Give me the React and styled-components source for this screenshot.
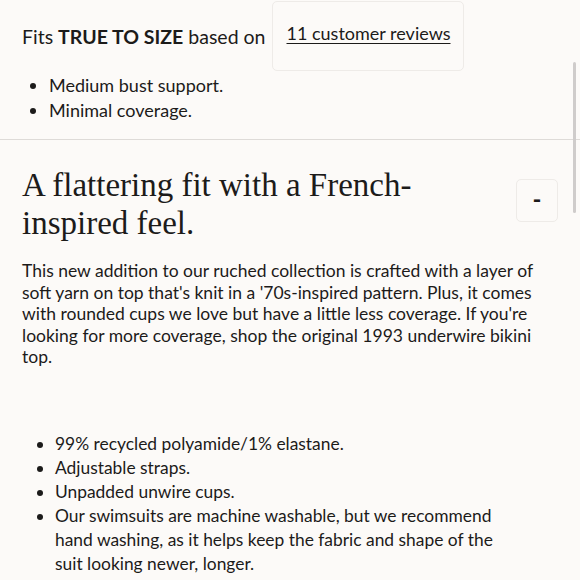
import React from "react";
import styled, { createGlobalStyle } from "styled-components";

const GlobalStyle = createGlobalStyle`
  html, body { margin: 0; padding: 0; background: #fcfaf8; }
  body { font-family: Lato, "Noto Sans", sans-serif; color: #1c1b1a; }
`;

const Page = styled.div`
  position: relative;
  width: 580px;
  height: 580px;
  overflow: hidden;
  background: #fcfaf8;
`;

const Top = styled.section`
  padding: 1px 22px 0;
`;

const FitRow = styled.div`
  display: flex;
  align-items: center;
  gap: 6px;
  font-size: 19.5px;
`;

const ReviewsButton = styled.button`
  height: 70px;
  padding: 0 12px 6px 14px;
  border: 1px solid #eeebe8;
  border-radius: 5px;
  background: transparent;
  font-family: inherit;
  font-size: 18px;
  color: #1c1b1a;
  text-decoration: underline;
  text-underline-offset: 3px;
  cursor: pointer;
`;

const List = styled.ul`
  margin: ${(p) => p.$margin};
  padding-left: ${(p) => p.$indent}px;
  font-size: ${(p) => p.$size}px;
  line-height: ${(p) => p.$lh}px;
`;

const Divider = styled.hr`
  margin: 0;
  border: 0;
  border-top: 1px solid #dedbd8;
`;

const Section = styled.section`
  padding: 26px 22px 0;
`;

const HeadRow = styled.div`
  display: flex;
  align-items: flex-start;
  justify-content: space-between;
`;

const Heading = styled.h2`
  margin: 0;
  font-family: "Liberation Serif", "Times New Roman", serif;
  font-weight: 400;
  font-size: 33px;
  line-height: 38px;
  max-width: 420px;
`;

const ToggleButton = styled.button`
  width: 42px;
  height: 43px;
  margin-top: 13px;
  border: 1px solid #eeebe8;
  border-radius: 5px;
  background: transparent;
  font-family: inherit;
  font-size: 24px;
  font-weight: 700;
  color: #1c1b1a;
  padding: 0 0 4px;
`;

const Paragraph = styled.p`
  margin: 18px 0 0;
  font-size: 17.5px;
  line-height: 21.5px;
`;

const Scrollbar = styled.div`
  position: absolute;
  right: 4px;
  top: 62px;
  width: 3px;
  height: 151px;
  border-radius: 2px;
  background: #cfcccb;
`;

export default function App() {
  return (
    <Page>
      <GlobalStyle />
      <Top>
        <FitRow>
          <span>
            Fits <b>TRUE TO SIZE</b> based on
          </span>
          <ReviewsButton>11 customer reviews</ReviewsButton>
        </FitRow>
        <List $margin="2px 0 16px" $indent={27} $size={18} $lh={25}>
          <li>Medium bust support.</li>
          <li>Minimal coverage.</li>
        </List>
      </Top>
      <Divider />
      <Section>
        <HeadRow>
          <Heading>A flattering fit with a French-inspired feel.</Heading>
          <ToggleButton>-</ToggleButton>
        </HeadRow>
        <Paragraph>
          This new addition to our ruched collection is crafted with a layer of
          soft yarn on top that's knit in a '70s-inspired pattern. Plus, it
          comes with rounded cups we love but have a little less coverage. If
          you're looking for more coverage, shop the original 1993 underwire
          bikini top.
        </Paragraph>
        <List $margin="64px 40px 0 0" $indent={33} $size={17.4} $lh={24}>
          <li>99% recycled polyamide/1% elastane.</li>
          <li>Adjustable straps.</li>
          <li>Unpadded unwire cups.</li>
          <li>
            Our swimsuits are machine washable, but we recommend hand washing,
            as it helps keep the fabric and shape of the suit looking newer,
            longer.
          </li>
        </List>
      </Section>
      <Scrollbar />
    </Page>
  );
}
